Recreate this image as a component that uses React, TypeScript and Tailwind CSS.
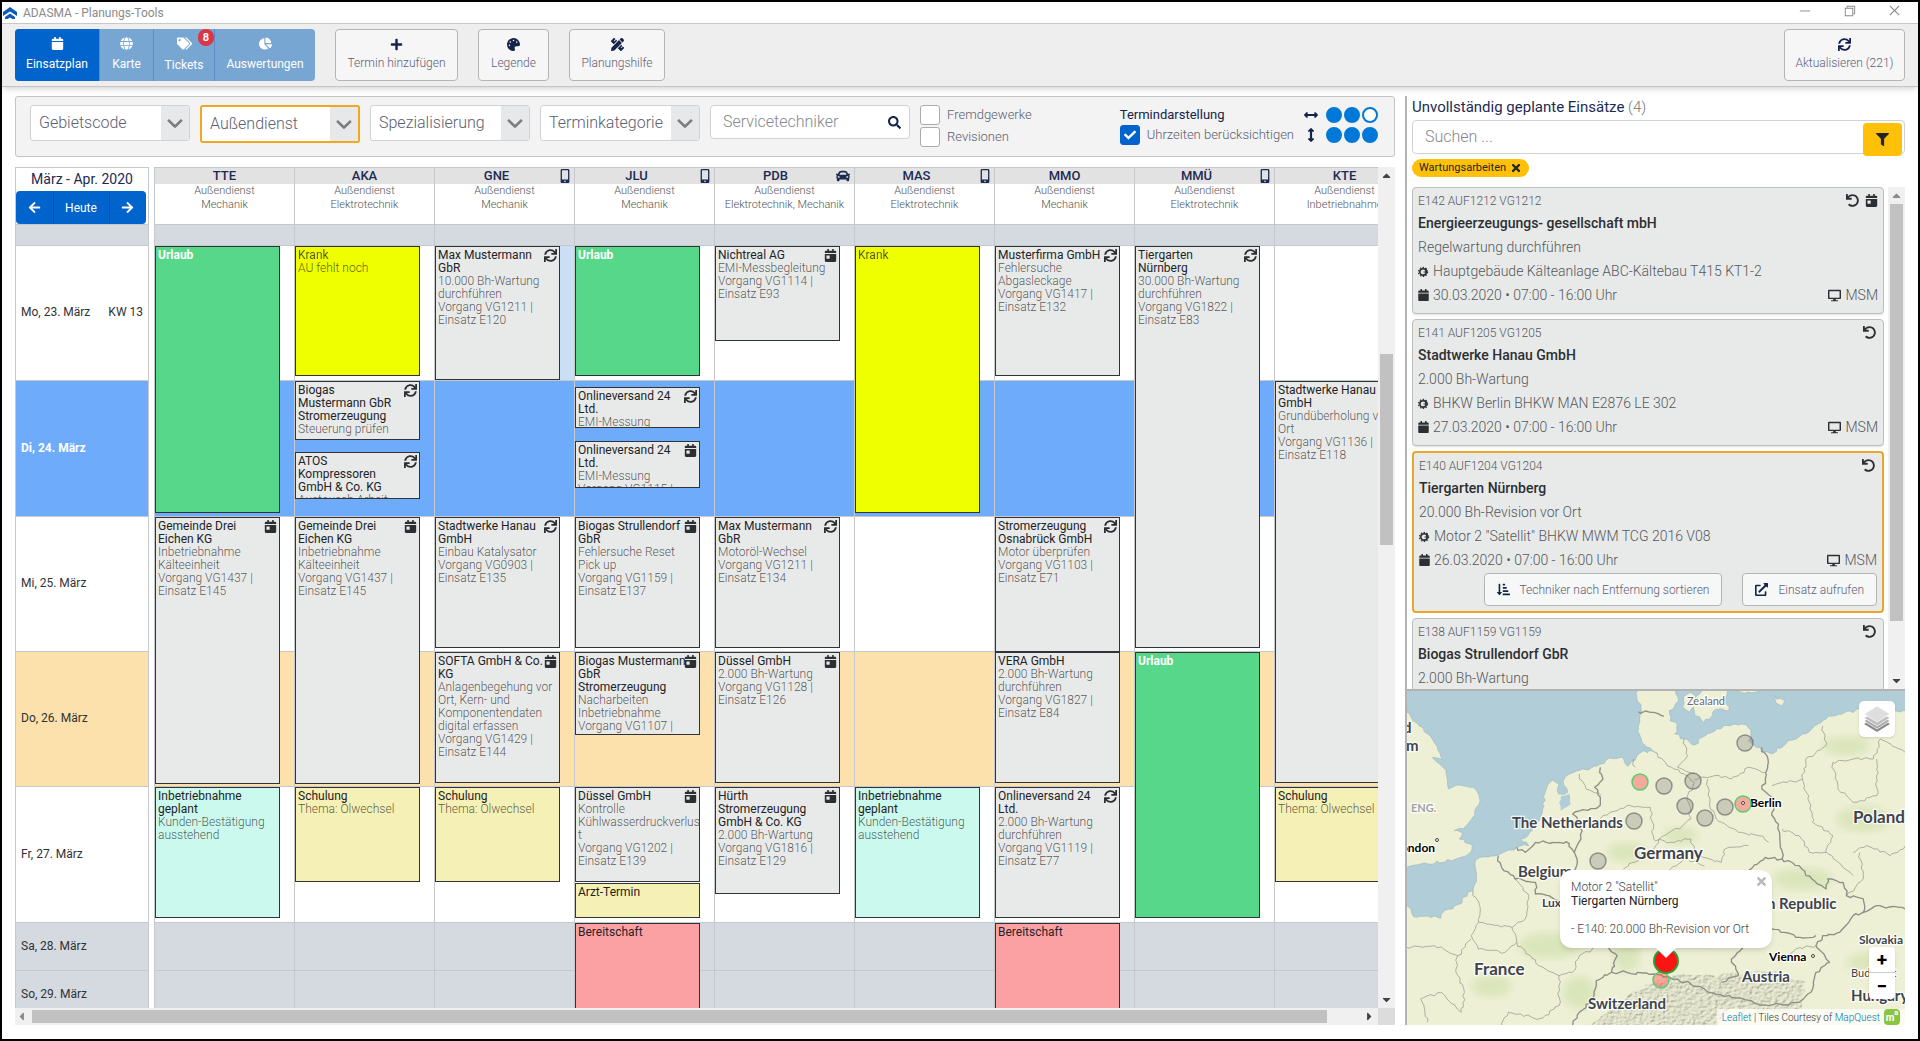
import type { ReactNode } from "react";
import { clsx } from "clsx";
import {
  FaArrowLeft,
  FaArrowRight,
  FaArrowsAltH,
  FaArrowsAltV,
  FaCalendar,
  FaCalendarDay,
  FaCar,
  FaCaretDown,
  FaCaretLeft,
  FaCaretRight,
  FaCaretUp,
  FaChartPie,
  FaCheck,
  FaDesktop,
  FaExternalLinkAlt,
  FaFilter,
  FaGlobe,
  FaMobileAlt,
  FaPalette,
  FaPencilRuler,
  FaPlus,
  FaSearch,
  FaSortAmountDownAlt,
  FaSync,
  FaTags,
  FaTimes,
  FaUndo,
} from "react-icons/fa";
import { VscChevronDown, VscChromeClose, VscChromeMinimize, VscChromeRestore } from "react-icons/vsc";

type Termin = {
  top: number;
  height: number;
  title: string;
  text?: string;
  color?: "gray" | "green" | "yellow" | "mint" | "sand" | "red";
  icon?: "sync" | "day";
};

type Techniker = {
  name: string;
  skills: string;
  device?: "mobile" | "car";
  marked?: boolean;
  termine: Termin[];
};

const terminColors = {
  gray: "bg-[#e8eaea]",
  green: "bg-[#57d789]",
  yellow: "bg-[#f0ff00]",
  mint: "bg-[#cbf9ee]",
  sand: "bg-[#f5f0b5]",
  red: "bg-[#fba1a3]",
};

const days = [
  { label: "Mo, 23. März", week: "KW 13", size: "h-[135px]", bg: "bg-white" },
  { label: "Di, 24. März", size: "h-[136px]", bg: "bg-[#6eacfb]", today: true },
  { label: "Mi, 25. März", size: "h-[135px]", bg: "bg-white" },
  { label: "Do, 26. März", size: "h-[135px]", bg: "bg-[#fce1ac]" },
  { label: "Fr, 27. März", size: "h-[136px]", bg: "bg-white" },
  { label: "Sa, 28. März", size: "h-[48px]", bg: "bg-[#d5dae0]" },
  { label: "So, 29. März", size: "h-[48px]", bg: "bg-[#d5dae0]" },
];

const techniker: Techniker[] = [
  {
    name: "TTE",
    skills: "Mechanik",
    termine: [
      { top: 0, height: 267, title: "Urlaub", color: "green" },
      { top: 271, height: 267, title: "Gemeinde Drei\nEichen KG", text: "Inbetriebnahme\nKälteeinheit\nVorgang VG1437 |\nEinsatz E145", icon: "day" },
      { top: 541, height: 131, title: "Inbetriebnahme\ngeplant", text: "Kunden-Bestätigung\nausstehend", color: "mint" },
    ],
  },
  {
    name: "AKA",
    skills: "Elektrotechnik",
    termine: [
      { top: 0, height: 130, title: "Krank", text: "AU fehlt noch", color: "yellow" },
      { top: 135, height: 59, title: "Biogas\nMustermann GbR\nStromerzeugung", text: "Steuerung prüfen", icon: "sync" },
      { top: 206, height: 47, title: "ATOS\nKompressoren\nGmbH & Co. KG", text: "Austausch Arbeit", icon: "sync" },
      { top: 271, height: 267, title: "Gemeinde Drei\nEichen KG", text: "Inbetriebnahme\nKälteeinheit\nVorgang VG1437 |\nEinsatz E145", icon: "day" },
      { top: 541, height: 95, title: "Schulung", text: "Thema: Ölwechsel", color: "sand" },
    ],
  },
  {
    name: "GNE",
    skills: "Mechanik",
    device: "mobile",
    marked: true,
    termine: [
      { top: 0, height: 134, title: "Max Mustermann\nGbR", text: "10.000 Bh-Wartung\ndurchführen\nVorgang VG1211 |\nEinsatz E120", icon: "sync" },
      { top: 271, height: 131, title: "Stadtwerke Hanau\nGmbH", text: "Einbau Katalysator\nVorgang VG0903 |\nEinsatz E135", icon: "sync" },
      { top: 406, height: 131, title: "SOFTA GmbH & Co.\nKG", text: "Anlagenbegehung vor\nOrt, Kern- und\nKomponentendaten\ndigital erfassen\nVorgang VG1429 |\nEinsatz E144", icon: "day" },
      { top: 541, height: 95, title: "Schulung", text: "Thema: Ölwechsel", color: "sand" },
    ],
  },
  {
    name: "JLU",
    skills: "Mechanik",
    device: "mobile",
    termine: [
      { top: 0, height: 130, title: "Urlaub", color: "green" },
      { top: 141, height: 41, title: "Onlineversand 24\nLtd.", text: "EMI-Messung", icon: "sync" },
      { top: 195, height: 47, title: "Onlineversand 24\nLtd.", text: "EMI-Messung\nVorgang VG1115 |", icon: "day" },
      { top: 271, height: 131, title: "Biogas Strullendorf\nGbR", text: "Fehlersuche Reset\nPick up\nVorgang VG1159 |\nEinsatz E137", icon: "day" },
      { top: 406, height: 83, title: "Biogas Mustermann\nGbR\nStromerzeugung", text: "Nacharbeiten\nInbetriebnahme\nVorgang VG1107 |", icon: "day" },
      { top: 541, height: 95, title: "Düssel GmbH", text: "Kontrolle\nKühlwasserdruckverlus\nt\nVorgang VG1202 |\nEinsatz E139", icon: "day" },
      { top: 637, height: 35, title: "Arzt-Termin", color: "sand" },
      { top: 677, height: 98, title: "Bereitschaft", color: "red" },
    ],
  },
  {
    name: "PDB",
    skills: "Elektrotechnik, Mechanik",
    device: "car",
    termine: [
      { top: 0, height: 95, title: "Nichtreal AG", text: "EMI-Messbegleitung\nVorgang VG1114 |\nEinsatz E93", icon: "day" },
      { top: 271, height: 131, title: "Max Mustermann\nGbR", text: "Motoröl-Wechsel\nVorgang VG1211 |\nEinsatz E134", icon: "sync" },
      { top: 406, height: 131, title: "Düssel GmbH", text: "2.000 Bh-Wartung\nVorgang VG1128 |\nEinsatz E126", icon: "day" },
      { top: 541, height: 107, title: "Hürth\nStromerzeugung\nGmbH & Co. KG", text: "2.000 Bh-Wartung\nVorgang VG1816 |\nEinsatz E129", icon: "day" },
    ],
  },
  {
    name: "MAS",
    skills: "Elektrotechnik",
    device: "mobile",
    termine: [
      { top: 0, height: 267, title: "Krank", color: "yellow" },
      { top: 541, height: 131, title: "Inbetriebnahme\ngeplant", text: "Kunden-Bestätigung\nausstehend", color: "mint" },
    ],
  },
  {
    name: "MMO",
    skills: "Mechanik",
    termine: [
      { top: 0, height: 130, title: "Musterfirma GmbH", text: "Fehlersuche\nAbgasleckage\nVorgang VG1417 |\nEinsatz E132", icon: "sync" },
      { top: 271, height: 135, title: "Stromerzeugung\nOsnabrück GmbH", text: "Motor überprüfen\nVorgang VG1103 |\nEinsatz E71", icon: "sync" },
      { top: 406, height: 131, title: "VERA GmbH", text: "2.000 Bh-Wartung\ndurchführen\nVorgang VG1827 |\nEinsatz E84" },
      { top: 541, height: 131, title: "Onlineversand 24\nLtd.", text: "2.000 Bh-Wartung\ndurchführen\nVorgang VG1119 |\nEinsatz E77", icon: "sync" },
      { top: 677, height: 98, title: "Bereitschaft", color: "red" },
    ],
  },
  {
    name: "MMÜ",
    skills: "Elektrotechnik",
    device: "mobile",
    termine: [
      { top: 0, height: 402, title: "Tiergarten\nNürnberg", text: "30.000 Bh-Wartung\ndurchführen\nVorgang VG1822 |\nEinsatz E83", icon: "sync" },
      { top: 406, height: 266, title: "Urlaub", color: "green" },
    ],
  },
  {
    name: "KTE",
    skills: "Inbetriebnahme",
    termine: [
      { top: 135, height: 402, title: "Stadtwerke Hanau\nGmbH", text: "Grundüberholung vor\nOrt\nVorgang VG1136 |\nEinsatz E118" },
      { top: 541, height: 95, title: "Schulung", text: "Thema: Ölwechsel", color: "sand" },
    ],
  },
];

const einsaetze = [
  { ids: "E142 AUF1212 VG1212", customer: "Energieerzeugungs- gesellschaft mbH", task: "Regelwartung durchführen", object: "Hauptgebäude Kälteanlage ABC-Kältebau T415 KT1-2", date: "30.03.2020 • 07:00 - 16:00 Uhr", day: true },
  { ids: "E141 AUF1205 VG1205", customer: "Stadtwerke Hanau GmbH", task: "2.000 Bh-Wartung", object: "BHKW Berlin BHKW MAN E2876 LE 302", date: "27.03.2020 • 07:00 - 16:00 Uhr" },
  { ids: "E140 AUF1204 VG1204", customer: "Tiergarten Nürnberg", task: "20.000 Bh-Revision vor Ort", object: 'Motor 2 "Satellit" BHKW MWM TCG 2016 V08', date: "26.03.2020 • 07:00 - 16:00 Uhr", selected: true },
  { ids: "E138 AUF1159 VG1159", customer: "Biogas Strullendorf GbR", task: "2.000 Bh-Wartung", object: "BHKW MAN E2842 LE 322", date: "25.03.2020 • 07:00 - 16:00 Uhr" },
];

function TitleBar() {
  return (
    <header className="flex h-[22px] shrink-0 items-center border-b border-[#c8c8c8] pl-px text-[#8a8a8a]">
      <svg viewBox="0 0 14 12" className="h-3 w-3.5" aria-hidden="true">
        <path d="M7 0 L14 5 V9 L7 4.500 L0 9 V5 Z" fill="#0a5cb8" />
        <path d="M7 6.500 L12 10 V12 H9.500 L7 10.500 L4.500 12 H2 V10 Z" fill="#0a5cb8" />
      </svg>
      <h1 className="ml-1.5 flex-1 text-[12px]">ADASMA - Planungs-Tools</h1>
      <div className="flex gap-[30px] pr-4 pb-1 text-[15px]">
        <button type="button" aria-label="Minimieren"><VscChromeMinimize /></button>
        <button type="button" aria-label="Wiederherstellen"><VscChromeRestore /></button>
        <button type="button" aria-label="Schließen"><VscChromeClose /></button>
      </div>
    </header>
  );
}

function ToolButton({ icon, children, className }: { icon: ReactNode; children: ReactNode; className?: string }) {
  return (
    <button
      type="button"
      className={clsx("flex h-[52px] flex-col items-center justify-center gap-1 rounded border border-[#b4b4b4] bg-[#f6f6f6] pb-0.5 text-[12px] leading-4 font-light text-[#5d6178]", className)}
    >
      <span className="text-[13px] text-[#16244a]">{icon}</span>
      {children}
    </button>
  );
}

function Toolbar() {
  const tab = "relative flex h-[52px] flex-col items-center justify-center gap-1.5 border-r border-[#5b8fc3] pb-0.5 text-[12px] leading-4 text-white";
  return (
    <nav className="z-10 flex h-[63px] shrink-0 items-start border-b border-[#c6c6c6] bg-[#eeeeee] pt-[5px] pr-[13px] pl-[13px] shadow-md">
      <div className="flex overflow-hidden rounded bg-[#78a6d2]">
        <button type="button" className={clsx(tab, "w-[85px] bg-[#0064cc]")}>
          <FaCalendar className="text-[13px]" />
          Einsatzplan
        </button>
        <button type="button" className={clsx(tab, "w-[54px]")}>
          <FaGlobe className="text-[13px]" />
          Karte
        </button>
        <button type="button" className={clsx(tab, "w-[61px]")}>
          <FaTags className="text-[15px]" />
          Tickets
          <span className="absolute top-0 right-0 flex h-[17px] w-4 items-center justify-center rounded-full bg-[#dc3545] text-[11px] font-bold">8</span>
        </button>
        <button type="button" className={clsx(tab, "w-[100px] border-r-0")}>
          <FaChartPie className="text-[13px]" />
          Auswertungen
        </button>
      </div>
      <div className="ml-5 flex flex-1 gap-5">
        <ToolButton icon={<FaPlus />} className="w-[123px]">Termin hinzufügen</ToolButton>
        <ToolButton icon={<FaPalette />} className="w-[71px]">Legende</ToolButton>
        <ToolButton icon={<FaPencilRuler />} className="w-24">Planungshilfe</ToolButton>
      </div>
      <ToolButton icon={<FaSync />} className="w-[121px]">Aktualisieren (221)</ToolButton>
    </nav>
  );
}

function FilterSelect({ label, active }: { label: string; active?: boolean }) {
  return (
    <div
      className={clsx(
        "flex w-40 overflow-hidden rounded-[3px] bg-white",
        active ? "h-[38px] border-2 border-[#f0a820]" : "h-9 border border-[#cfd2d6]",
      )}
    >
      <select aria-label={label} className="min-w-0 flex-1 appearance-none pl-2 text-[16px] font-light text-[#5b6070] outline-none">
        <option>{label}</option>
      </select>
      <span className="flex w-7 items-center justify-center bg-[#e7e8ea] text-[22px] text-[#7d7d7d]">
        <VscChevronDown className="stroke-1" />
      </span>
    </div>
  );
}

function Check({ label, checked }: { label: string; checked?: boolean }) {
  return (
    <label className="flex h-5 items-center gap-[7px] text-[13px] font-light text-[#5b6070]">
      <span className="grid h-5 w-5 place-items-center">
        <input
          type="checkbox"
          defaultChecked={checked}
          className="h-5 w-5 appearance-none rounded-[3px] border border-[#a9abae] bg-white [grid-area:1/1] checked:border-[#0064cc] checked:bg-[#0064cc]"
        />
        {checked && <FaCheck className="pointer-events-none text-[12px] text-white [grid-area:1/1]" />}
      </span>
      {label}
    </label>
  );
}

function Dots({ icon, filled, label }: { icon: ReactNode; filled: number; label: string }) {
  return (
    <div className="flex h-5 items-center gap-0.5" role="group" aria-label={label}>
      <span className="mr-1.5 flex w-3.5 justify-center text-[14px] text-[#16244a]">{icon}</span>
      {[1, 2, 3].map((n) => (
        <button
          key={n}
          type="button"
          aria-label={`Stufe ${n}`}
          className={clsx("h-4 w-4 rounded-full border-2 border-[#0078d7]", n <= filled ? "bg-[#0078d7]" : "bg-white")}
        />
      ))}
    </div>
  );
}

function FilterBar() {
  return (
    <section className="flex h-[61px] shrink-0 items-start gap-2.5 rounded-[3px] border border-[#c2c4c6] bg-[#f3f3f3] pt-2 pr-4 pl-3.5">
      <FilterSelect label="Gebietscode" />
      <FilterSelect label="Außendienst" active />
      <FilterSelect label="Spezialisierung" />
      <FilterSelect label="Terminkategorie" />
      <div className="flex h-[34px] w-[200px] items-center rounded border border-[#cfd2d6] bg-white pr-2">
        <input aria-label="Servicetechniker" placeholder="Servicetechniker" className="min-w-0 flex-1 pl-3 text-[16px] font-light outline-none placeholder:text-[#85888e]" />
        <FaSearch className="text-[13px] text-[#16244a]" />
      </div>
      <div className="flex flex-col gap-0.5">
        <Check label="Fremdgewerke" />
        <Check label="Revisionen" />
      </div>
      <div className="ml-auto flex flex-col">
        <span className="h-5 text-[13px] leading-5 text-[#16244a]">Termindarstellung</span>
        <Check label="Uhrzeiten berücksichtigen" checked />
      </div>
      <div className="flex flex-col">
        <Dots icon={<FaArrowsAltH />} filled={2} label="Breite" />
        <Dots icon={<FaArrowsAltV />} filled={3} label="Höhe" />
      </div>
    </section>
  );
}

function TerminBox({ termin }: { termin: Termin }) {
  const color = termin.color ?? "gray";
  return (
    <article
      className={clsx("absolute left-0 w-[125px] overflow-hidden border border-[#303436] pt-0.5 pl-0.5 text-[12px] leading-[13px] whitespace-pre", terminColors[color])}
      style={{ top: termin.top, height: termin.height }}
    >
      {termin.icon === "sync" && <FaSync className="absolute top-0.5 right-0.5 text-[13px] text-[#2c2f31]" />}
      {termin.icon === "day" && <FaCalendarDay className="absolute top-0.5 right-0.5 text-[13px] text-[#2c2f31]" />}
      <h3 className={clsx(color === "green" ? "font-bold text-white" : "text-[#1f2325]", color === "yellow" && "opacity-75")}>{termin.title}</h3>
      {termin.text && <p className="font-light text-black/65">{termin.text}</p>}
    </article>
  );
}

function TechnikerColumn({ person }: { person: Techniker }) {
  return (
    <div className="flex w-[140px] shrink-0 flex-col border-l border-[#c6c9cb]">
      <div className="h-[58px] shrink-0 border-y border-[#c6c9cb] text-center">
        <div className="flex h-4 items-center bg-[#e2e2e2] text-[13px] leading-4 font-medium text-[#1d2a52]">
          <h2 className="flex-1">{person.name}</h2>
          {person.device === "mobile" && <FaMobileAlt className="mr-0.5 text-[14px]" />}
          {person.device === "car" && <FaCar className="mr-1 text-[14px]" />}
        </div>
        <p className="text-[11px] leading-[14px] font-light whitespace-nowrap text-[#555]">
          Außendienst
          <br />
          {person.skills}
        </p>
      </div>
      <div className="h-[21px] shrink-0 border-b border-[#c6c9cb] bg-[#d5dae0]" />
      <div className="relative min-h-0 flex-1 overflow-hidden">
        {days.map((day, i) => (
          <div key={day.label} className={clsx("border-b border-[#c6c9cb]", day.size, i === 0 && person.marked ? "bg-[#cadff5]" : day.bg)} />
        ))}
        {person.termine.map((termin) => (
          <TerminBox key={termin.top} termin={termin} />
        ))}
      </div>
    </div>
  );
}

function DayColumn() {
  return (
    <div className="flex w-[134px] shrink-0 flex-col border-x border-t border-[#c6c9cb]">
      <div className="flex h-[57px] shrink-0 flex-col justify-between border-b border-[#c6c9cb]">
        <h2 className="text-center text-[14px] leading-[22px] text-[#1d2a52]">März - Apr. 2020</h2>
        <div className="flex h-[33px] w-[130px] rounded bg-[#0064cc] text-[13px] text-white">
          <button type="button" aria-label="Zurück" className="flex flex-1 items-center justify-center border-r border-[#0054ae]"><FaArrowLeft /></button>
          <button type="button" className="w-14 border-r border-[#0054ae] text-[12px]">Heute</button>
          <button type="button" aria-label="Weiter" className="flex flex-1 items-center justify-center"><FaArrowRight /></button>
        </div>
      </div>
      <div className="h-[21px] shrink-0 border-b border-[#c6c9cb] bg-[#d5dae0]" />
      <div className="min-h-0 flex-1 overflow-hidden">
        {days.map((day) => (
          <div
            key={day.label}
            className={clsx("flex items-center justify-between border-b border-[#c6c9cb] px-[5px] pb-0.5 text-[12px]", day.size, day.bg, day.today ? "font-bold text-white" : "text-[#2f3336]")}
          >
            <span>{day.label}</span>
            {day.week && <span>{day.week}</span>}
          </div>
        ))}
      </div>
    </div>
  );
}

function Calendar() {
  return (
    <section className="mt-2.5 flex min-h-0 flex-1 flex-col">
      <div className="flex min-h-0 flex-1">
        <DayColumn />
        <div className="ml-[5px] flex min-w-0 flex-1 overflow-hidden">
          {techniker.map((person) => (
            <TechnikerColumn key={person.name} person={person} />
          ))}
        </div>
        <div className="flex w-[17px] shrink-0 flex-col items-center bg-[#f0f0f0] text-[13px] text-[#444]">
          <FaCaretUp className="my-0.5" />
          <div className="w-[13px] grow-[16]" />
          <div className="w-[13px] grow-[18] bg-[#c1c1c1]" />
          <div className="grow-[42]" />
          <FaCaretDown className="my-0.5" />
        </div>
      </div>
      <div className="flex h-[17px] shrink-0 items-center bg-[#f0f0f0] text-[13px]">
        <FaCaretLeft className="mr-1 text-[#8a8a8a]" />
        <div className="h-[13px] flex-[36] bg-[#c1c1c1]" />
        <div className="flex-1" />
        <FaCaretRight className="mr-0.5 text-[#444]" />
        <div className="h-full w-[17px] bg-[#dcdcdc]" />
      </div>
    </section>
  );
}

function GearIcon() {
  return (
    <svg viewBox="0 0 12 12" className="h-[11px] w-[11px] shrink-0" fill="none" stroke="#2c2f31" aria-hidden="true">
      <circle cx="5.500" cy="6.500" r="3.500" strokeWidth="1.800" />
      <circle cx="5.500" cy="6.500" r="5" strokeWidth="1.200" strokeDasharray="1.600 1.600" />
      <path d="M6 6.500 H9 V3.500 L7.500 2.500" strokeWidth="1.200" />
    </svg>
  );
}

function EinsatzCard({ einsatz }: { einsatz: (typeof einsaetze)[number] }) {
  return (
    <article
      className={clsx(
        "shrink-0 rounded bg-[#e8eaea] px-[5px] pt-0.5 text-[14px] leading-6 font-light text-[#55585a]",
        einsatz.selected ? "border-2 border-[#eaa628] pb-[5px]" : "border border-[#bcbebf] pb-1.5 shadow-sm",
      )}
    >
      <div className="flex h-[21px] items-center text-[12px]">
        <span className="flex-1">{einsatz.ids}</span>
        <span className={clsx("flex gap-1.5 text-[13px] text-[#2c2f31]", !einsatz.day && "pr-0.5")}>
          <FaUndo />
          {einsatz.day && <FaCalendarDay />}
        </span>
      </div>
      <h3 className="font-medium text-[#2c2f31]">{einsatz.customer}</h3>
      <p>{einsatz.task}</p>
      <p className="flex items-center gap-1 whitespace-nowrap">
        <GearIcon />
        {einsatz.object}
      </p>
      <div className="flex items-center gap-1">
        <FaCalendar className="w-[11px] text-[12px] text-[#2c2f31]" />
        <span className="flex-1">{einsatz.date}</span>
        <FaDesktop className="text-[13px] text-[#2c2f31]" />
        <span>MSM</span>
      </div>
      {einsatz.selected && (
        <div className="mt-px flex justify-end gap-5 text-[12px] text-[#5d6178]">
          <button type="button" className="flex h-[33px] items-center gap-2.5 rounded border border-[#b4b4b4] bg-[#f6f7f7] px-3">
            <FaSortAmountDownAlt className="text-[13px] text-[#16244a]" />
            Techniker nach Entfernung sortieren
          </button>
          <button type="button" className="flex h-[33px] items-center gap-2.5 rounded border border-[#b4b4b4] bg-[#f6f7f7] px-3">
            <FaExternalLinkAlt className="text-[13px] text-[#16244a]" />
            Einsatz aufrufen
          </button>
        </div>
      )}
    </article>
  );
}

// Breaks a coarse outline into small wiggly steps so coasts and borders look natural.
function rough(points: number[][], amount = 6) {
  let seed = 7;
  const noise = () => {
    seed = (seed * 16807) % 2147483647;
    return seed / 2147483647 - 0.5;
  };
  let d = `M${points[0][0]} ${points[0][1]}`;
  for (let i = 1; i < points.length; i++) {
    const [ax, ay] = points[i - 1];
    const [bx, by] = points[i];
    const steps = Math.max(1, Math.round(Math.hypot(bx - ax, by - ay) / 11));
    for (let s = 1; s <= steps; s++) {
      const k = s < steps ? amount : 0;
      d += `L${(ax + ((bx - ax) * s) / steps + noise() * k * 2).toFixed(0)} ${(ay + ((by - ay) * s) / steps + noise() * k * 2).toFixed(0)}`;
    }
  }
  return d;
}

const land = [
  [[50, 85], [62, 115], [85, 140], [112, 165], [130, 190], [155, 242], [125, 236], [150, 258], [166, 285], [173, 330], [205, 318], [245, 325], [263, 348], [264, 375], [250, 410], [225, 440], [190, 455], [215, 462], [205, 480], [243, 497], [238, 520], [210, 535], [160, 550], [100, 552], [75, 558], [50, 565], [30, 500], [30, 100], [50, 85]],
  [[50, 680], [62, 690], [68, 712], [100, 712], [150, 718], [160, 695], [213, 672], [215, 655], [245, 635], [255, 600], [252, 545], [265, 535], [320, 528], [375, 505], [410, 500], [385, 480], [420, 455], [440, 425], [455, 380], [462, 330], [480, 303], [500, 315], [498, 345], [525, 340], [512, 305], [530, 285], [570, 270], [610, 262], [640, 242], [690, 235], [703, 262], [730, 230], [750, 215], [790, 222], [745, 190], [735, 150], [745, 100], [730, 60], [730, 20], [845, 20], [850, 70], [826, 95], [828, 125], [850, 135], [842, 165], [870, 180], [900, 198], [930, 172], [965, 150], [1000, 140], [1040, 135], [1068, 155], [1060, 185], [1085, 205], [1110, 218], [1130, 225], [1165, 200], [1220, 165], [1290, 120], [1330, 105], [1400, 90], [1450, 85], [1540, 100], [1540, 1060], [30, 1060], [30, 680], [50, 680]],
  [[930, 20], [1005, 20], [990, 60], [1003, 92], [962, 92], [930, 132], [902, 110], [893, 70], [930, 20]],
  [[868, 52], [888, 40], [915, 60], [885, 100], [865, 84], [868, 52]],
  [[1015, 20], [1110, 20], [1080, 40], [1020, 38], [1015, 20]],
  [[1138, 50], [1168, 66], [1160, 82], [1142, 72], [1138, 50]],
];

const borders = [
  [[735, 98], [780, 100], [810, 112]],
  [[622, 265], [630, 300], [605, 325], [622, 355], [615, 385], [570, 392], [540, 405], [562, 430], [565, 480], [545, 520], [552, 560], [530, 600], [540, 660], [560, 700], [640, 790], [672, 830], [655, 880]],
  [[375, 505], [400, 520], [430, 490], [480, 490], [520, 488], [545, 520]],
  [[320, 530], [330, 565], [370, 600], [430, 610], [430, 645], [470, 650], [530, 690]],
  [[1100, 205], [1118, 240], [1110, 300], [1100, 330], [1135, 360], [1130, 400], [1152, 460], [1160, 540]],
  [[1160, 540], [1110, 535], [1060, 575], [1010, 600], [980, 640], [1040, 700], [1100, 750], [1150, 752], [1200, 775], [1260, 770]],
  [[1160, 540], [1210, 560], [1230, 590], [1290, 630], [1295, 600], [1340, 610], [1350, 650], [1400, 660], [1400, 700], [1440, 680], [1524, 690]],
  [[1400, 700], [1370, 710], [1330, 760], [1280, 770], [1260, 800], [1300, 850], [1260, 880], [1250, 930], [1210, 970], [1120, 980], [1010, 955], [930, 930], [850, 900], [780, 885], [700, 880], [655, 880]],
  [[655, 880], [610, 905], [600, 960], [560, 1000], [540, 1038]],
  [[1100, 750], [1050, 800], [1010, 840], [1030, 890], [980, 910]],
];

const regions = [
  [[560, 285], [580, 330], [625, 350]],
  [[720, 240], [725, 265]],
  [[790, 222], [820, 260], [870, 285], [900, 310], [880, 350], [890, 420], [865, 440], [795, 480], [780, 510], [740, 540], [690, 570]],
  [[870, 180], [880, 230], [850, 265], [900, 285]],
  [[900, 300], [960, 290], [1010, 300], [1060, 265], [1110, 280]],
  [[940, 300], [945, 380], [965, 420], [1030, 460], [1090, 470], [1120, 490]],
  [[615, 425], [650, 400], [710, 380], [770, 385], [780, 480]],
  [[780, 480], [830, 490], [890, 480], [905, 530], [980, 550], [990, 510], [1060, 500]],
  [[820, 580], [870, 540], [930, 560]],
  [[1280, 140], [1290, 200], [1230, 240], [1220, 300], [1130, 320]],
  [[1310, 250], [1370, 240], [1430, 240], [1450, 180], [1524, 220]],
  [[1310, 250], [1325, 330], [1370, 370], [1440, 350], [1440, 240]],
  [[1160, 450], [1210, 470], [1240, 520], [1290, 520], [1370, 590]],
  [[1290, 520], [1310, 470], [1250, 430], [1240, 370], [1220, 300]],
  [[1370, 520], [1410, 500], [1480, 530], [1524, 500]],
  [[1390, 520], [1400, 600], [1350, 650]],
  [[245, 635], [265, 680], [262, 730], [360, 745], [375, 790], [340, 820], [260, 810], [240, 770], [262, 730]],
  [[50, 805], [130, 800], [200, 830], [240, 780]],
  [[200, 830], [195, 880], [220, 940], [210, 1000], [150, 940], [90, 960], [110, 1030]],
  [[360, 745], [400, 720], [410, 650], [370, 600]],
  [[375, 790], [440, 860], [500, 890], [540, 880], [560, 830], [640, 790]],
  [[330, 1038], [350, 1000], [440, 1020], [500, 980], [500, 890]],
  [[1150, 850], [1200, 810], [1260, 800]],
];

const greens = [
  [470, 800, 90, 40], [700, 520, 60, 30], [860, 470, 50, 26], [1060, 620, 60, 30], [1220, 600, 90, 34], [1400, 420, 80, 40],
  [900, 760, 60, 40], [620, 640, 60, 34], [1350, 200, 70, 30], [560, 940, 50, 50], [300, 920, 60, 34], [700, 830, 40, 50], [1420, 850, 70, 30],
];

const labels = [
  { text: "Zealand", x: 280, y: 14, cls: "text-[11px] fill-[#666b70]" },
  { text: "d", x: -4, y: 42, cls: "text-[15px] font-bold fill-[#3f444c]" },
  { text: "m", x: -1, y: 60, cls: "text-[15px] font-bold fill-[#3f444c]" },
  { text: "ENG.", x: 4, y: 121, cls: "text-[11px] font-bold fill-[#a0a3a5]" },
  { text: "London", x: -12, y: 161, cls: "text-[12px] font-bold fill-black" },
  { text: "The Netherlands", x: 105, y: 137, cls: "text-[15px] font-bold fill-[#3f444c]" },
  { text: "Berlin", x: 343, y: 116, cls: "text-[12px] font-bold fill-black" },
  { text: "Poland", x: 446, y: 132, cls: "text-[17px] font-bold fill-[#3f444c]" },
  { text: "Germany", x: 227, y: 168, cls: "text-[17px] font-bold fill-[#3f444c]" },
  { text: "Belgium", x: 111, y: 186, cls: "text-[15px] font-bold fill-[#3f444c]" },
  { text: "Luxembourg", x: 135, y: 216, cls: "text-[12px] font-bold fill-[#3f444c]" },
  { text: "Czech Republic", x: 328, y: 218, cls: "text-[15px] font-bold fill-[#3f444c]" },
  { text: "Slovakia", x: 452, y: 253, cls: "text-[12px] font-bold fill-[#3f444c]" },
  { text: "Vienna", x: 362, y: 270, cls: "text-[12px] font-bold fill-black" },
  { text: "Budapest", x: 444, y: 286, cls: "text-[11px] fill-[#3f444c]" },
  { text: "Austria", x: 335, y: 291, cls: "text-[15px] font-bold fill-[#3f444c]" },
  { text: "France", x: 67, y: 284, cls: "text-[17px] font-bold fill-[#3f444c]" },
  { text: "Switzerland", x: 181, y: 318, cls: "text-[15px] font-bold fill-[#3f444c]" },
  { text: "Hungary", x: 444, y: 310, cls: "text-[15px] font-bold fill-[#3f444c]" },
];

const sites = [[338, 52], [257, 95], [286, 90], [278, 115], [318, 116], [298, 127], [227, 130], [191, 170]];
const openSites = [[233, 91], [336, 113], [254, 289]];

function MapDrawing() {
  return (
    <svg viewBox="0 0 498 334" preserveAspectRatio="xMidYMid slice" className="h-full w-full" aria-label="Karte">
      <defs>
        <filter id="soft"><feGaussianBlur stdDeviation="12" /></filter>
        <filter id="relief" x="0" y="0" width="1" height="1">
          <feTurbulence type="fractalNoise" baseFrequency="0.09 0.12" numOctaves="4" seed="4" />
          <feDiffuseLighting lightingColor="#eceed6" surfaceScale="6"><feDistantLight azimuth="225" elevation="52" /></feDiffuseLighting>
          <feComposite in2="SourceGraphic" operator="in" />
        </filter>
      </defs>
      <rect width="498" height="334" fill="#b1cdd7" />
      <g transform="scale(.338 .3333) translate(-50 -36)">
        {land.map((shape, i) => <path key={i} d={rough(shape, 5) + "Z"} fill="#eef0d6" stroke="#9fb9c0" strokeWidth="2" />)}
        <path d={rough([[505, 350], [530, 345], [535, 375], [505, 395], [500, 370], [505, 350]], 3)} fill="#b1cdd7" />
        {greens.map(([cx, cy, rx, ry], i) => <ellipse key={i} cx={cx} cy={cy} rx={rx} ry={ry} fill="#dbe5bb" filter="url(#soft)" />)}
        <path
          d={rough([[560, 1060], [640, 1000], [700, 950], [780, 910], [860, 885], [960, 890], [1060, 880], [1160, 880], [1230, 910], [1220, 980], [1160, 1000], [1000, 990], [960, 1060], [560, 1060]])}
          fill="#000"
          filter="url(#relief)"
          opacity="0.6"
        />
        <g fill="none" stroke="#8d9084" strokeLinejoin="round">
          {regions.map((line, i) => <path key={i} d={rough(line, 5)} strokeWidth="2" />)}
          {borders.map((line, i) => <path key={i} d={rough(line, 5)} strokeWidth="4" />)}
        </g>
      </g>
      <g fill="#fff" stroke="#444" strokeWidth="1">
        <circle cx="30" cy="149" r="1.500" />
        <circle cx="406" cy="265" r="1.500" />
      </g>
      {labels.map((label) => (
        <text key={label.text} x={label.x} y={label.y} className={clsx("font-['Lato',sans-serif] stroke-white/80 stroke-[2.5px] [paint-order:stroke]", label.cls)}>
          {label.text}
        </text>
      ))}
      {sites.map(([x, y]) => <circle key={x} cx={x} cy={y} r="8" fill="#777" fillOpacity=".3" stroke="#666" strokeOpacity=".65" strokeWidth="1.500" />)}
      {openSites.map(([x, y]) => <circle key={x} cx={x} cy={y} r="8" fill="#f55" fillOpacity=".45" stroke="#56cf74" strokeWidth="1.500" />)}
      <circle cx="336" cy="112" r="1.500" fill="#fff" stroke="#444" />
      <circle cx="259" cy="270" r="12" fill="#fb1414" stroke="#2f9e36" strokeWidth="2" />
    </svg>
  );
}

function MapPanel() {
  return (
    <section className="relative min-h-0 flex-1 overflow-hidden border-t-2 border-[#b3b3b3]">
      <MapDrawing />
      <button type="button" aria-label="Ebenen" className="absolute top-2.5 right-2.5 flex h-9 w-9 items-center justify-center rounded-[5px] bg-white shadow">
        <svg viewBox="0 0 26 26" className="h-[26px] w-[26px]" aria-hidden="true">
          <path d="M13 10 L26 18 L13 26 L0 18 Z" fill="#8b8b8b" />
          <path d="M13 7 L26 15 L13 23 L0 15 Z" fill="#a9a9a9" stroke="#fff" strokeWidth=".7" />
          <path d="M13 4 L26 12 L13 20 L0 12 Z" fill="#c0c0c0" stroke="#fff" strokeWidth=".7" />
          <path d="M13 0 L26 8 L13 16 L0 8 Z" fill="#dedede" stroke="#fff" strokeWidth=".7" />
        </svg>
      </button>
      <div className="absolute top-[179px] left-1/2 ml-[-96px] h-[78px] w-[212px] rounded-xl bg-white px-[11px] pt-2.5 text-[12px] leading-[14px] font-light text-[#444] shadow-md">
        <p>Motor 2 "Satellit"</p>
        <p className="font-normal text-[#222]">Tiergarten Nürnberg</p>
        <p className="mt-3.5 whitespace-nowrap">- E140: 20.000 Bh-Revision vor Ort</p>
        <button type="button" aria-label="Popup schließen" className="absolute top-[5px] right-1 text-[13px] text-[#b8b8b8]"><FaTimes /></button>
        <span className="absolute top-full left-1/2 -ml-2.5 border-x-10 border-t-10 border-x-transparent border-t-white" />
      </div>
      <div className="absolute right-2.5 bottom-[26px] flex w-[26px] flex-col rounded bg-white text-[19px] leading-[25px] font-bold text-black shadow">
        <button type="button" className="h-[26px] border-b border-[#ccc]">+</button>
        <button type="button" className="h-[26px]">−</button>
      </div>
      <div className="absolute right-0 bottom-0 flex h-4 items-center gap-1 bg-white/70 pr-[5px] pl-[5px] text-[10px] font-light whitespace-nowrap text-[#333]">
        <span>
          <a href="#leaflet" className="text-[#0078a8]">Leaflet</a> | Tiles Courtesy of <a href="#mapquest" className="text-[#0078a8]">MapQuest</a>
        </span>
        <span className="flex h-4 w-4 items-center justify-center rounded-sm bg-[#8bc53f] text-[10px] font-bold text-white">m<sup>a</sup></span>
      </div>
    </section>
  );
}

function SidePanel() {
  return (
    <aside className="flex w-[500px] shrink-0 flex-col border-l-2 border-[#b3b3b3]">
      <div className="pl-[5px]">
        <h2 className="h-6 text-[15px] leading-[22px] text-[#1d2a52]">
          Unvollständig geplante Einsätze <span className="font-light text-[#777]">(4)</span>
        </h2>
        <div className="flex h-[34px] rounded border border-[#cfd2d6]">
          <input aria-label="Suchen" placeholder="Suchen ..." className="min-w-0 flex-1 pl-3 text-[16px] font-light outline-none placeholder:text-[#85888e]" />
          <button type="button" aria-label="Filtern" className="mt-0.5 mr-0.5 flex h-[33px] w-[39px] items-center justify-center rounded bg-[#ffc107] text-[13px] text-[#212529]">
            <FaFilter />
          </button>
        </div>
        <button type="button" className="mt-[5px] flex h-[18px] items-center gap-1 rounded-full bg-[#ffc107] px-[7px] text-[11px] text-[#212529]">
          Wartungsarbeiten
          <FaTimes className="text-[12px]" />
        </button>
      </div>
      <div className="mt-2.5 flex h-[502px] shrink-0 pl-[5px]">
        <div className="flex min-w-0 flex-1 flex-col gap-[5px] overflow-hidden">
          {einsaetze.map((einsatz) => (
            <EinsatzCard key={einsatz.ids} einsatz={einsatz} />
          ))}
        </div>
        <div className="ml-1 flex w-[17px] flex-col items-center bg-[#f0f0f0] text-[13px]">
          <FaCaretUp className="my-0.5 text-[#8a8a8a]" />
          <div className="w-[13px] grow-[90] bg-[#c1c1c1]" />
          <div className="grow-[11]" />
          <FaCaretDown className="my-0.5 text-[#444]" />
        </div>
      </div>
      <MapPanel />
    </aside>
  );
}

export default function App() {
  return (
    <div className="flex h-screen w-full flex-col overflow-hidden border-2 border-black bg-white font-['Roboto','Liberation_Sans',sans-serif]">
      <TitleBar />
      <Toolbar />
      <main className="flex min-h-0 flex-1 gap-2.5 px-[13px] pt-[9px] pb-3.5">
        <div className="flex min-w-0 flex-1 flex-col">
          <FilterBar />
          <Calendar />
        </div>
        <SidePanel />
      </main>
    </div>
  );
}
